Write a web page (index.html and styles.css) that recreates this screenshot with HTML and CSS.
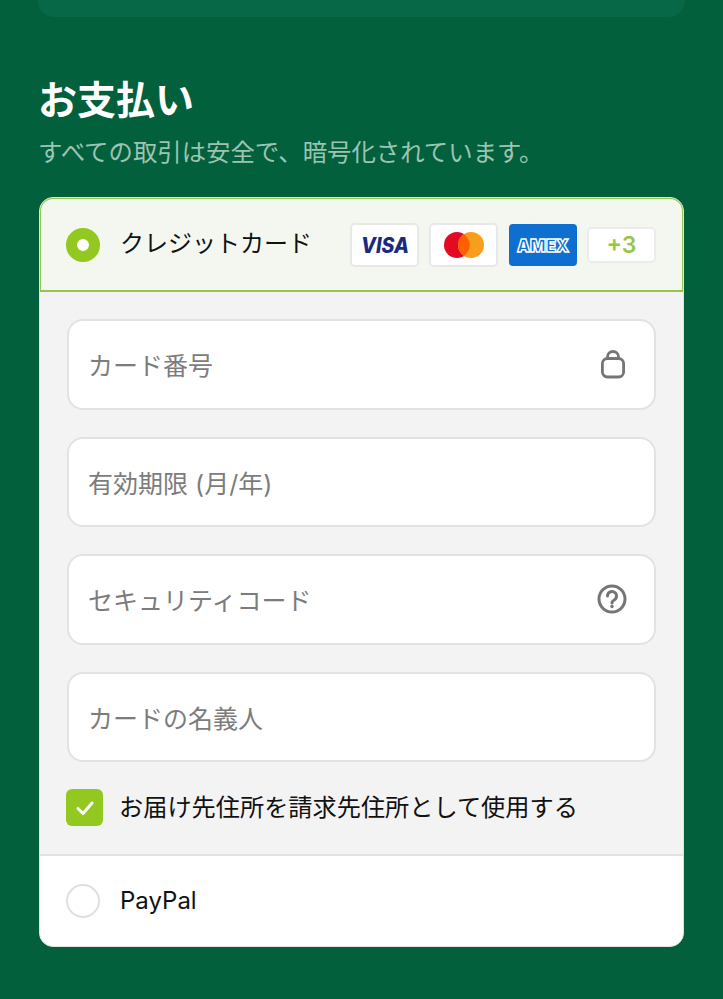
FILE: index.html
```html
<!DOCTYPE html>
<html lang="ja">

<head>
    <meta charset="UTF-8">
    <meta name="viewport" content="width=device-width, initial-scale=1.0">
    <title>お支払い</title>
    <link rel="stylesheet" href="styles.css">
</head>

<body>
    <div class="top-strip"></div>

    <h1 class="title">お支払い</h1>
    <p class="subtitle">すべての取引は安全で、暗号化されています。</p>

    <div class="pay-card">
        <div class="method-head">
            <span class="radio radio-on"></span>
            <span class="method-label head-label">クレジットカード</span>
            <div class="brands">
                <span class="brand">
                    <svg class="logo" width="64" height="26" viewBox="0 0 64 26">
                        <text x="32" y="20.500" text-anchor="middle" textLength="48" lengthAdjust="spacingAndGlyphs" class="visa-text">VISA</text>
                    </svg>
                </span>
                <span class="brand">
                    <svg width="42" height="28" viewBox="0 0 42 28">
                        <circle cx="14" cy="14" r="13" fill="#e30a23"></circle>
                        <circle cx="28" cy="14" r="13" fill="#f99d1c"></circle>
                        <path d="M21 3.200a13 13 0 0 1 0 21.600a13 13 0 0 1 0-21.600z" fill="#ff5f00"></path>
                    </svg>
                </span>
                <span class="brand brand-amex">
                    <svg class="logo" width="66" height="26" viewBox="0 0 66 26">
                        <text x="33" y="19.500" text-anchor="middle" textLength="52" lengthAdjust="spacingAndGlyphs" class="amex-text">AMEX</text>
                    </svg>
                </span>
                <span class="brand-more">+3</span>
            </div>
        </div>

        <div class="method-body">
            <div class="field">
                <span class="placeholder">カード番号</span>
                <svg class="field-icon lock-icon" width="26" height="29" viewBox="0 0 26 29" fill="none" stroke="#757575" stroke-width="2.800">
                    <rect x="2.400" y="8.500" width="21.200" height="18.500" rx="5"></rect>
                    <path d="M7.500 8.500V7a5.500 5.500 0 0 1 11 0v1.500"></path>
                </svg>
            </div>
            <div class="field">
                <span class="placeholder">有効期限 (月/年)</span>
            </div>
            <div class="field">
                <span class="placeholder">セキュリティコード</span>
                <svg class="field-icon" width="30" height="30" viewBox="0 0 30 30" fill="none" stroke="#757575" stroke-width="3">
                    <circle cx="15" cy="15" r="13"></circle>
                    <path d="M10.500 12a4.500 4.500 0 1 1 7 3.700c-1.600 1-2.500 1.800-2.500 3.300" stroke-linecap="round"></path>
                    <circle cx="15" cy="22.500" r="1.700" fill="#757575" stroke="none"></circle>
                </svg>
            </div>
            <div class="field">
                <span class="placeholder">カードの名義人</span>
            </div>

            <div class="same-address">
                <span class="checkbox">
                    <svg width="20" height="16" viewBox="0 0 20 16" fill="none" stroke="#fff" stroke-width="3" stroke-linecap="round" stroke-linejoin="round">
                        <path d="M3 8.500l5 5L17 3"></path>
                    </svg>
                </span>
                <span class="same-label">お届け先住所を請求先住所として使用する</span>
            </div>
        </div>

        <div class="method-row">
            <span class="radio"></span>
            <span class="method-label">PayPal</span>
        </div>
    </div>
</body>

</html>
```

FILE: styles.css
```css
body {
    margin: 0;
    height: 999px;
    overflow: hidden;
    background: #02603c;
    font-family: 'Inter', 'Noto Sans CJK JP', sans-serif;
    color: #111;
}

.top-strip {
    height: 17px;
    margin: 0 38px;
    background: #066846;
    border-radius: 0 0 16px 16px;
}

.title {
    margin: 56px 38px 0;
    font-size: 39px;
    line-height: 54px;
    font-weight: 700;
    color: #fff;
}

.subtitle {
    margin: 8px 38px 0;
    font-size: 24.400px;
    line-height: 34px;
    color: #9cc4b2;
}

.pay-card {
    margin: 28px 39px 0;
    background: #fff;
    border-radius: 14px;
    overflow: hidden;
    border: 1px solid #dfe3e0;
}

.method-head {
    display: flex;
    align-items: center;
    height: 91px;
    padding: 0 26px 0 25px;
    background: #f3f7f0;
    border: 2px solid #94c748;
    border-radius: 14px 14px 0 0;
    margin: -1px -1px 0;
}

.radio {
    flex: none;
    box-sizing: border-box;
    width: 34px;
    height: 34px;
    border-radius: 50%;
    border: 2px solid #e0e0e0;
    background: #fff;
}

.radio-on {
    border: 11px solid #92c81f;
}

.method-label {
    margin-left: 20px;
    font-size: 24px;
    line-height: 32px;
}

.head-label {
    margin-bottom: 1px;
}

.brands {
    display: flex;
    align-items: center;
    gap: 10.300px;
    margin-left: auto;
}

.brand {
    display: flex;
    align-items: center;
    justify-content: center;
    box-sizing: border-box;
    width: 69px;
    height: 44px;
    background: #fff;
    border: 2px solid #e8e8e8;
    border-radius: 5px;
}

.brand-amex {
    width: 68px;
    height: 42px;
    background: #0f6fd1;
    border: 0;
    border-radius: 4px;
}

.logo {
    overflow: visible;
}

.visa-text {
    font-family: 'Inter', sans-serif;
    font-size: 21px;
    font-weight: 800;
    font-style: italic;
    fill: #1a2a80;
}

.amex-text {
    font-family: 'Inter', sans-serif;
    font-size: 18px;
    font-weight: 900;
    fill: #0f6fd1;
    stroke: #fff;
    stroke-width: 1.500;
}

.brand-more {
    box-sizing: border-box;
    width: 69px;
    height: 36px;
    text-align: center;
    line-height: 32px;
    font-size: 23px;
    font-weight: 600;
    color: #94c748;
    background: #fff;
    border: 2px solid #ececec;
    border-radius: 5px;
}

.method-body {
    display: flex;
    flex-direction: column;
    gap: 27px;
    padding: 27px 27px 28px;
    background: #f3f3f3;
    border-bottom: 2px solid #e2e2e2;
}

.field {
    display: flex;
    align-items: center;
    justify-content: space-between;
    box-sizing: border-box;
    height: 90.500px;
    padding: 0 27px 0 19px;
    background: #fff;
    border: 2px solid #e2e2e2;
    border-radius: 16px;
}

.lock-icon {
    margin-right: 1px;
}

.placeholder {
    font-size: 25px;
    color: #7c7c7c;
}

.same-address {
    display: flex;
    align-items: center;
    gap: 16px;
    margin: 0 0 0 -1px;
}

.checkbox {
    display: flex;
    align-items: center;
    justify-content: center;
    width: 37px;
    height: 37px;
    background: #92c81f;
    border-radius: 6px;
}

.same-label {
    font-size: 24.200px;
    line-height: 36px;
}

.method-row {
    display: flex;
    align-items: center;
    height: 90px;
    padding: 0 26px;
}
```
